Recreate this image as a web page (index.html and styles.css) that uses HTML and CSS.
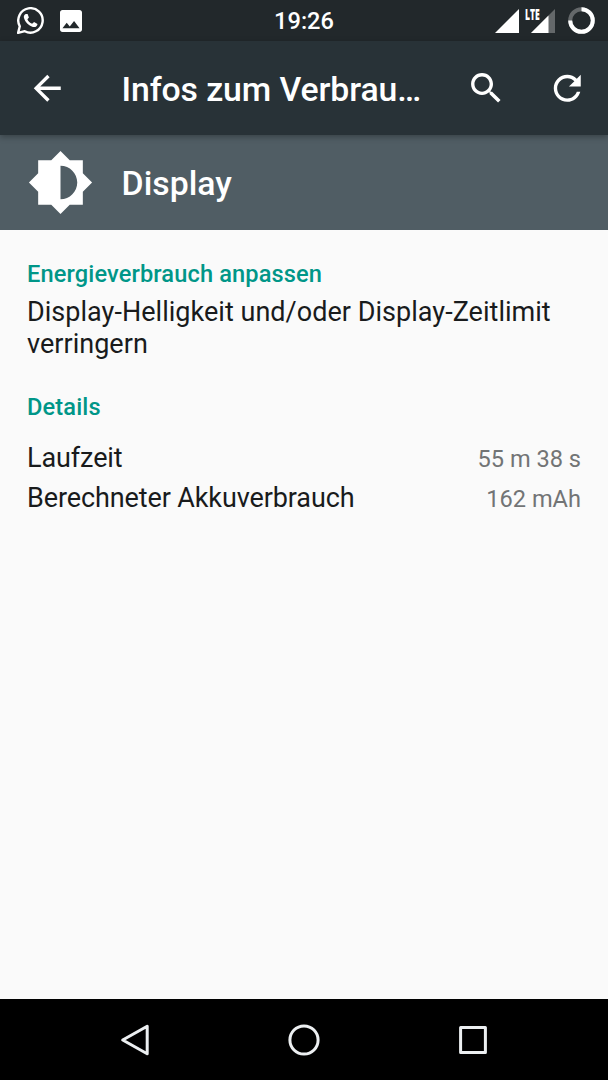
FILE: index.html
```
<!DOCTYPE html>
<html lang="de">
<head>
    <meta charset="UTF-8">
    <meta name="viewport" content="width=device-width, initial-scale=1.0">
    <title>Infos zum Verbrauch</title>
    <link rel="stylesheet" href="styles.css">
</head>
<body>
    <div class="status-bar">
        <div class="notifications">
            <svg width="28" height="28" viewBox="0.5 0.3 28 28">
                <path d="M1.6 26.2 L3.3 19.6 A12.2 12.2 0 1 1 8.3 24.5 Z" fill="none" stroke="#fff" stroke-width="2.4" stroke-linejoin="round"/>
                <path d="M9.2 7.2 C7.5 8 7 9.8 7.5 11.4 C8.7 15.4 12 19 16.4 20.2 C18.6 20.8 20.8 19.9 21 17.3 L17.6 15.3 L15.6 17 C13.6 16.4 11.6 14.5 10.9 12.5 L12.4 10.9 L11.1 7.4 Z" fill="#fff"/>
            </svg>
            <svg width="22" height="22" viewBox="3 3 18 18">
                <path d="M21 19V5c0-1.1-.9-2-2-2H5c-1.1 0-2 .9-2 2v14c0 1.1.9 2 2 2h14c1.1 0 2-.9 2-2zM8.5 13.5l2.5 3.01L14.5 12l4.5 6H5l3.5-4.5z" fill="#fff"/>
            </svg>
        </div>
        <div class="clock">19:26</div>
        <div class="signals">
            <svg width="24" height="24" viewBox="0 0 24 24">
                <path d="M0 24 L24 0 V24 Z" fill="#fff"/>
            </svg>
            <div class="lte">
                <svg width="24" height="24" viewBox="0 0 24 24">
                    <path d="M0 24 L24 0 V24 Z" fill="#64686a"/>
                    <path d="M0 24 L17.5 6.5 V24 Z" fill="#fff"/>
                </svg>
                <span class="lte-label">LTE</span>
            </div>
            <svg class="battery" width="27" height="27" viewBox="0 0 27 27">
                <circle cx="13.5" cy="13.5" r="11.3" fill="none" stroke="#64686a" stroke-width="4"/>
                <path d="M13.5 2.2 A11.3 11.3 0 1 1 2.2 13.5" fill="none" stroke="#fff" stroke-width="4"/>
            </svg>
        </div>
    </div>

    <div class="app-bar">
        <svg class="icon" viewBox="0 0 24 24">
            <path d="M20 11H7.83l5.59-5.59L12 4l-8 8 8 8 1.41-1.41L7.83 13H20v-2z"/>
        </svg>
        <h1>Infos zum Verbrau…</h1>
        <div class="actions">
            <svg class="icon" viewBox="0 0 24 24">
                <path d="M15.5 14h-.79l-.28-.27C15.41 12.59 16 11.11 16 9.5 16 5.91 13.09 3 9.5 3S3 5.91 3 9.5 5.91 16 9.5 16c1.61 0 3.09-.59 4.23-1.57l.27.28v.79l5 4.99L20.49 19l-4.99-5zm-6 0C7.01 14 5 11.99 5 9.5S7.01 5 9.5 5 14 7.01 14 9.5 11.99 14 9.5 14z"/>
            </svg>
            <svg class="icon" viewBox="0 0 24 24">
                <path d="M17.65 6.35C16.2 4.9 14.21 4 12 4c-4.42 0-7.99 3.58-7.99 8s3.57 8 7.99 8c3.73 0 6.84-2.55 7.73-6h-2.08c-.82 2.33-3.04 4-5.65 4-3.31 0-6-2.69-6-6s2.69-6 6-6c1.66 0 3.14.69 4.22 1.78L13 11h7V4l-2.35 2.35z"/>
            </svg>
        </div>
    </div>

    <div class="entry">
        <svg class="entry-icon" viewBox="0 0 24 24">
            <path d="M20 15.31L23.31 12 20 8.69V4h-4.69L12 .69 8.69 4H4v4.69L.69 12 4 15.31V20h4.69L12 23.31 15.31 20H20v-4.69zM12 18V6c3.31 0 6 2.69 6 6s-2.69 6-6 6z"/>
        </svg>
        <h2>Display</h2>
    </div>

    <div class="content">
        <h3>Energieverbrauch anpassen</h3>
        <p>Display-Helligkeit und/oder Display-Zeitlimit verringern</p>
        <h3>Details</h3>
        <div class="row">
            <span class="label">Laufzeit</span>
            <span class="value">55 m 38 s</span>
        </div>
        <div class="row">
            <span class="label">Berechneter Akkuverbrauch</span>
            <span class="value">162 mAh</span>
        </div>
    </div>

    <div class="nav-bar">
        <svg width="34" height="34" viewBox="0 0 34 34">
            <path d="M4.7 17 L29.2 3.2 V30.8 Z"/>
        </svg>
        <svg width="34" height="34" viewBox="0 0 34 34">
            <circle cx="17" cy="17" r="14.1"/>
        </svg>
        <svg width="34" height="34" viewBox="0 0 34 34">
            <rect x="4.6" y="4.6" width="24.8" height="24.8"/>
        </svg>
    </div>
</body>
</html>
```
FILE: styles.css
```
* {
    box-sizing: border-box;
}
body {
    font-family: Roboto, sans-serif;
    margin: 0;
    height: 1080px;
    display: flex;
    flex-direction: column;
    background: #fafafa;
    color: #191b1c;
}
svg {
    display: block;
    flex-shrink: 0;
}
h1, h2, h3, p {
    margin: 0;
}
.status-bar {
    height: 41px;
    background: #22282b;
    color: white;
    display: grid;
    grid-template-columns: 1fr auto 1fr;
    align-items: center;
    padding: 0 13px 0 17px;
}
.notifications {
    display: flex;
    align-items: center;
    gap: 15px;
}
.clock {
    font-size: 23.6px;
    font-weight: 500;
    line-height: 39px;
    padding-top: 2px;
    margin: 0 4px 0 0;
}
.signals {
    display: flex;
    align-items: center;
    justify-content: flex-end;
    gap: 12px;
}
.lte {
    position: relative;
}
.lte-label {
    position: absolute;
    left: -6.5px;
    top: -2px;
    font-family: "Open Sans", sans-serif;
    font-size: 15px;
    font-weight: 800;
    line-height: 14px;
    transform: scaleX(0.57);
    transform-origin: left;
}
.battery {
    margin-left: 1px;
}
.app-bar {
    height: 94px;
    background: #283237;
    color: white;
    display: flex;
    align-items: center;
    padding: 0 20.5px 0 27px;
    box-shadow: 0 2px 6px rgba(0, 0, 0, 0.3);
    z-index: 1;
}
.icon {
    width: 40.5px;
    height: 40.5px;
    fill: white;
}
h1, h2 {
    font-size: 33.8px;
    font-weight: 500;
    line-height: 40px;
    padding-top: 3px;
}
.app-bar h1 {
    margin-left: 54px;
    letter-spacing: -0.1px;
    white-space: nowrap;
}
.actions {
    display: flex;
    gap: 41px;
    margin-left: auto;
}
.entry {
    height: 94.5px;
    background: #505d64;
    color: white;
    display: flex;
    align-items: center;
    padding-left: 27px;
    gap: 27.6px;
}
.entry-icon {
    width: 67px;
    height: 67px;
    fill: white;
}
.content {
    flex: 1;
    padding: 29.5px 27px 0;
    font-size: 27px;
    line-height: 32px;
}
.content h3 {
    color: #009688;
    font-size: 23.6px;
    font-weight: 500;
    line-height: 30px;
    letter-spacing: 0.13px;
}
.content p {
    margin: 7px 0 31.5px;
    letter-spacing: 0.03px;
}
.row {
    display: flex;
    justify-content: space-between;
    align-items: baseline;
    height: 40px;
}
.content h3 + .row {
    margin-top: 20.5px;
}
.label {
    letter-spacing: -0.11px;
}
.value {
    color: #727475;
    font-size: 23.6px;
}
.nav-bar {
    height: 81px;
    background: black;
    display: flex;
    align-items: center;
    justify-content: center;
    gap: 135px;
}
.nav-bar svg {
    fill: none;
    stroke: #eceff1;
    stroke-width: 3;
    stroke-linejoin: round;
}
```
